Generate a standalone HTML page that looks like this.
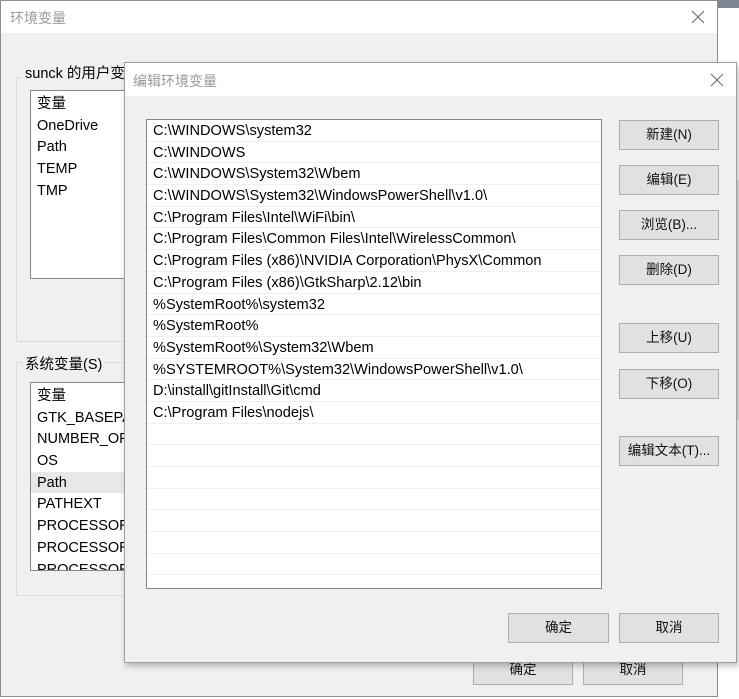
<!DOCTYPE html>
<html><head><meta charset="utf-8"><style>
*{box-sizing:border-box;margin:0;padding:0}
body{width:739px;height:699px;overflow:hidden;background:#fff;position:relative;font-family:"Liberation Sans","Noto Sans CJK SC",sans-serif;font-size:14.5px;color:#000}
.abs{position:absolute}
.btn{position:absolute;background:#e1e1e1;border:1px solid #adadad;text-align:center;font-size:13.5px;color:#111}
.row{height:21.7px;line-height:23px;padding-left:6px;border-bottom:1px solid #f0f0f0;white-space:nowrap;font-size:14.6px}
.lrow{height:21.7px;line-height:23px;padding-left:6px;white-space:nowrap}
</style></head><body>
<div class="abs" style="left:717px;top:0;width:22px;height:8px;background:#7d8590"></div>
<div class="abs" style="left:717px;top:180px;width:22px;height:240px;background:#e8e8e8"></div>
<div class="abs" style="left:0;top:0;width:718px;height:697px;background:#f0f0f0;border:1px solid #8a8f96">
  <div class="abs" style="left:0;top:0;width:716px;height:32px;background:#fff"></div>
  <div class="abs" style="left:9px;top:7px;color:#999;font-size:14px">环境变量</div>
  <svg class="abs" style="left:690px;top:9px" width="14" height="14"><path d="M1 1L13 13M13 1L1 13" stroke="#666" stroke-width="1"/></svg>
  <div class="abs" style="left:15px;top:76px;width:300px;height:265px;border:1px solid #dcdcdc"></div>
  <div class="abs" style="left:22px;top:61px;background:#f0f0f0;padding:0 2px">sunck 的用户变量</div>
  <div class="abs" style="left:29px;top:89px;width:110px;height:189px;background:#fff;border:1px solid #828790;padding-top:2px">
    <div class="lrow">变量</div><div class="lrow">OneDrive</div><div class="lrow">Path</div><div class="lrow">TEMP</div><div class="lrow">TMP</div>
  </div>
  <div class="abs" style="left:15px;top:361px;width:300px;height:234px;border:1px solid #dcdcdc"></div>
  <div class="abs" style="left:22px;top:352px;background:#f0f0f0;padding:0 2px">系统变量(S)</div>
  <div class="abs" style="left:29px;top:381px;width:110px;height:189px;background:#fff;border:1px solid #828790;padding-top:2px;overflow:hidden">
    <div class="lrow">变量</div><div class="lrow">GTK_BASEPATH</div><div class="lrow">NUMBER_OF_</div><div class="lrow">OS</div><div class="lrow" style="background:#e8e8e8">Path</div><div class="lrow">PATHEXT</div><div class="lrow">PROCESSOR_</div><div class="lrow">PROCESSOR_</div><div class="lrow">PROCESSOR_</div>
  </div>
  <div class="btn" style="left:472px;top:654px;width:100px;height:30px;line-height:28px">确定</div>
  <div class="btn" style="left:582px;top:654px;width:100px;height:30px;line-height:28px">取消</div>
</div>
<div class="abs" style="left:124px;top:62px;width:613px;height:601px;background:#f0f0f0;border:1px solid #9aa0a6;box-shadow:2px 3px 6px rgba(0,0,0,.25)">
  <div class="abs" style="left:0;top:0;width:611px;height:33px;background:#fff"></div>
  <div class="abs" style="left:8px;top:8px;color:#999;font-size:14px">编辑环境变量</div>
  <svg class="abs" style="left:585px;top:10px" width="14" height="14"><path d="M1 1L13 13M13 1L1 13" stroke="#666" stroke-width="1"/></svg>
  <div class="abs" style="left:21px;top:56px;width:456px;height:470px;background:#fff;border:1px solid #828790;overflow:hidden">
    <div class="row">C:\WINDOWS\system32</div>
    <div class="row">C:\WINDOWS</div>
    <div class="row">C:\WINDOWS\System32\Wbem</div>
    <div class="row">C:\WINDOWS\System32\WindowsPowerShell\v1.0\</div>
    <div class="row">C:\Program Files\Intel\WiFi\bin\</div>
    <div class="row">C:\Program Files\Common Files\Intel\WirelessCommon\</div>
    <div class="row">C:\Program Files (x86)\NVIDIA Corporation\PhysX\Common</div>
    <div class="row">C:\Program Files (x86)\GtkSharp\2.12\bin</div>
    <div class="row">%SystemRoot%\system32</div>
    <div class="row">%SystemRoot%</div>
    <div class="row">%SystemRoot%\System32\Wbem</div>
    <div class="row">%SYSTEMROOT%\System32\WindowsPowerShell\v1.0\</div>
    <div class="row">D:\install\gitInstall\Git\cmd</div>
    <div class="row">C:\Program Files\nodejs\</div>
    <div class="row"></div><div class="row"></div><div class="row"></div><div class="row"></div><div class="row"></div><div class="row"></div><div class="row"></div><div class="row"></div>
  </div>
  <div class="btn" style="left:494px;top:57px;width:100px;height:30px;line-height:28px">新建(N)</div>
  <div class="btn" style="left:494px;top:102px;width:100px;height:30px;line-height:28px">编辑(E)</div>
  <div class="btn" style="left:494px;top:147px;width:100px;height:30px;line-height:28px">浏览(B)...</div>
  <div class="btn" style="left:494px;top:192px;width:100px;height:30px;line-height:28px">删除(D)</div>
  <div class="btn" style="left:494px;top:260px;width:100px;height:30px;line-height:28px">上移(U)</div>
  <div class="btn" style="left:494px;top:306px;width:100px;height:30px;line-height:28px">下移(O)</div>
  <div class="btn" style="left:494px;top:373px;width:100px;height:30px;line-height:28px">编辑文本(T)...</div>
  <div class="btn" style="left:383px;top:550px;width:101px;height:30px;line-height:28px">确定</div>
  <div class="btn" style="left:494px;top:550px;width:100px;height:30px;line-height:28px">取消</div>
</div>
</body></html>
